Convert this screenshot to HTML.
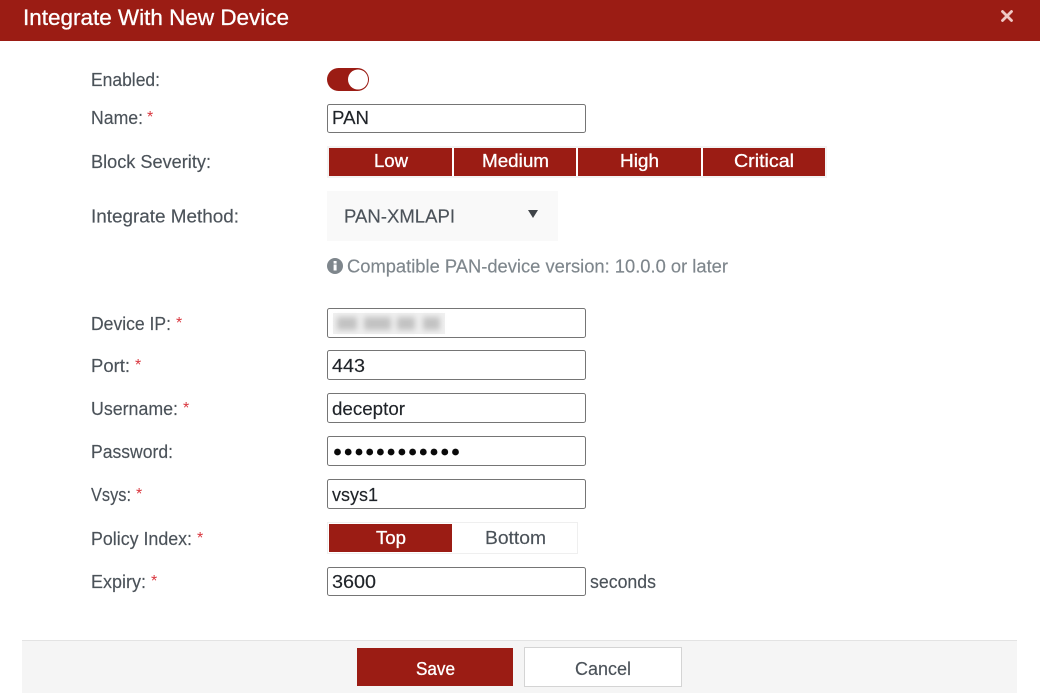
<!DOCTYPE html>
<html><head><meta charset="utf-8"><title>Integrate With New Device</title>
<style>
html,body{margin:0;padding:0;background:#fff;width:1040px;height:696px;overflow:hidden}
svg{display:block}
text{font-family:"Liberation Sans",sans-serif;font-size:18.5px;fill:#4b5259;stroke:#4b5259;stroke-width:.15px}
.v{fill:#1f2328;stroke:#1f2328}
.w{fill:#fff;stroke:#fff;stroke-width:.3px}
.s{fill:#d9363e;stroke:none;font-size:16px}
.f{fill:#fff;stroke:#757575;stroke-width:1}
.r{fill:#9b1c14}
</style></head><body>
<svg width="1040" height="696" viewBox="0 0 1040 696" xmlns="http://www.w3.org/2000/svg">
<defs><filter id="b" x="-10%" y="-40%" width="120%" height="180%"><feGaussianBlur stdDeviation="3"/></filter></defs>
<rect x="0" y="0" width="1040" height="41" class="r"/>
<text x="23" y="25" class="w" style="font-size:22px" textLength="266" lengthAdjust="spacingAndGlyphs">Integrate With New Device</text>
<path d="M1002.5 11.5l9 9m0-9l-9 9" stroke="#f0c9c5" stroke-width="2.8" stroke-linecap="round" fill="none"/>

<text x="91" y="86" textLength="69" lengthAdjust="spacingAndGlyphs">Enabled:</text>
<rect x="327" y="68" width="42" height="23" rx="11.5" class="r"/>
<circle cx="358" cy="79.5" r="10" fill="#fff"/>

<text x="91" y="124" textLength="52" lengthAdjust="spacingAndGlyphs">Name:</text><text x="147" y="122" class="s">*</text>
<rect x="327.5" y="104.5" width="258" height="28" rx="2" class="f"/>
<text x="332" y="124" class="v" textLength="37" lengthAdjust="spacingAndGlyphs">PAN</text>

<text x="91" y="168" textLength="120" lengthAdjust="spacingAndGlyphs">Block Severity:</text>
<rect x="327" y="146" width="500" height="32" fill="#f3f3f3"/>
<rect x="329" y="148" width="123" height="28" class="r"/>
<rect x="454" y="148" width="122" height="28" class="r"/>
<rect x="578" y="148" width="123" height="28" class="r"/>
<rect x="703" y="148" width="122" height="28" class="r"/>
<rect x="452" y="148" width="2" height="28" fill="#fff"/><rect x="576" y="148" width="2" height="28" fill="#fff"/><rect x="701" y="148" width="2" height="28" fill="#fff"/>
<text x="374" y="167" class="w" textLength="34" lengthAdjust="spacingAndGlyphs">Low</text>
<text x="482" y="167" class="w" textLength="67" lengthAdjust="spacingAndGlyphs">Medium</text>
<text x="620" y="167" class="w" textLength="39" lengthAdjust="spacingAndGlyphs">High</text>
<text x="734" y="167" class="w" textLength="60" lengthAdjust="spacingAndGlyphs">Critical</text>

<text x="91" y="222.500" textLength="148" lengthAdjust="spacingAndGlyphs">Integrate Method:</text>
<rect x="327" y="191" width="231" height="50" fill="#f9f9f9"/>
<text x="344" y="222.500" textLength="111" lengthAdjust="spacingAndGlyphs">PAN-XMLAPI</text>
<path d="M528 210h10l-5 8z" fill="#3f4448"/>

<circle cx="335" cy="266" r="8" fill="#7e868c"/>
<rect x="333.6" y="264.5" width="3" height="6" fill="#fff"/><rect x="333.6" y="261" width="3" height="2.6" fill="#fff"/>
<text x="347" y="272.500" style="fill:#7e868c;stroke:#7e868c" textLength="381" lengthAdjust="spacingAndGlyphs">Compatible PAN-device version: 10.0.0 or later</text>

<text x="91" y="330" textLength="80" lengthAdjust="spacingAndGlyphs">Device IP:</text><text x="176" y="328" class="s">*</text>
<rect x="327.5" y="308.5" width="258" height="29" rx="2" class="f"/>
<rect x="333" y="313" width="112" height="21" fill="#f0f0f0"/>
<g filter="url(#b)" fill="#c2c2c2"><rect x="337" y="317" width="20" height="13"/><rect x="364" y="317" width="27" height="13"/><rect x="397" y="317" width="18" height="13"/><rect x="423" y="317" width="17" height="13"/></g>

<text x="91" y="372" textLength="39" lengthAdjust="spacingAndGlyphs">Port:</text><text x="135" y="370" class="s">*</text>
<rect x="327.5" y="350.5" width="258" height="29" rx="2" class="f"/>
<text x="332" y="372" class="v" textLength="33" lengthAdjust="spacingAndGlyphs">443</text>

<text x="91" y="415" textLength="87" lengthAdjust="spacingAndGlyphs">Username:</text><text x="183" y="413" class="s">*</text>
<rect x="327.5" y="393.5" width="258" height="29" rx="2" class="f"/>
<text x="332" y="415" class="v" textLength="73" lengthAdjust="spacingAndGlyphs">deceptor</text>

<text x="91" y="458" textLength="82" lengthAdjust="spacingAndGlyphs">Password:</text>
<rect x="327.5" y="436.5" width="258" height="29" rx="2" class="f"/>
<g fill="#0a0a0a"><circle cx="337.5" cy="452" r="3.4"/><circle cx="348.2" cy="452" r="3.4"/><circle cx="359" cy="452" r="3.4"/><circle cx="369.7" cy="452" r="3.4"/><circle cx="380.4" cy="452" r="3.4"/><circle cx="391.1" cy="452" r="3.4"/><circle cx="401.9" cy="452" r="3.4"/><circle cx="412.6" cy="452" r="3.4"/><circle cx="423.3" cy="452" r="3.4"/><circle cx="434" cy="452" r="3.4"/><circle cx="444.8" cy="452" r="3.4"/><circle cx="455.5" cy="452" r="3.4"/></g>

<text x="91" y="501" textLength="40" lengthAdjust="spacingAndGlyphs">Vsys:</text><text x="136" y="499" class="s">*</text>
<rect x="327.5" y="479.5" width="258" height="29" rx="2" class="f"/>
<text x="332" y="501" class="v" textLength="46" lengthAdjust="spacingAndGlyphs">vsys1</text>

<text x="91" y="545" textLength="101" lengthAdjust="spacingAndGlyphs">Policy Index:</text><text x="197" y="543" class="s">*</text>
<rect x="327.5" y="522.5" width="250" height="31" fill="#fff" stroke="#efefef"/>
<rect x="329" y="524" width="123" height="28" class="r"/>
<text x="376" y="544" class="w" textLength="30" lengthAdjust="spacingAndGlyphs">Top</text>
<text x="485" y="544" textLength="61" lengthAdjust="spacingAndGlyphs">Bottom</text>

<text x="91" y="588" textLength="55" lengthAdjust="spacingAndGlyphs">Expiry:</text><text x="151" y="586" class="s">*</text>
<rect x="327.5" y="567.5" width="258" height="28" rx="2" class="f"/>
<text x="332" y="588" class="v" textLength="44" lengthAdjust="spacingAndGlyphs">3600</text>
<text x="590" y="588" textLength="66" lengthAdjust="spacingAndGlyphs">seconds</text>

<rect x="22" y="640" width="995" height="53" fill="#f5f5f5"/>
<rect x="22" y="640" width="995" height="1" fill="#e3e3e3"/>
<rect x="357" y="648" width="156" height="38" class="r"/>
<text x="416" y="675" class="w" textLength="39" lengthAdjust="spacingAndGlyphs">Save</text>
<rect x="524.5" y="647.5" width="157" height="39" fill="#fff" stroke="#d4d4d4"/>
<text x="575" y="675" textLength="56" lengthAdjust="spacingAndGlyphs">Cancel</text>
</svg>
</body></html>
